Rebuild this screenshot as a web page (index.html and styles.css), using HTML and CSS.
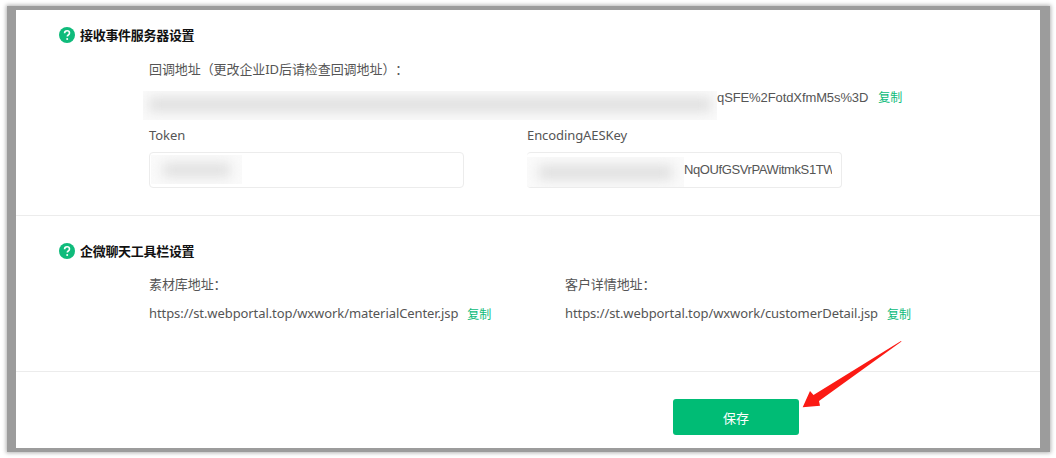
FILE: index.html
```html
<!DOCTYPE html>
<html lang="zh-CN">
<head>
<meta charset="utf-8">
<title>企微设置</title>
<link rel="stylesheet" href="styles.css">
</head>
<body>
<div class="frame">
  <main class="sheet">
    <section class="section first">
      <h2 class="title">
        <svg class="help" viewBox="0 0 16 16" aria-hidden="true"><circle cx="8" cy="8" r="8" fill="#0fbb7b"/><path d="M5.6 6.2c0-1.5 1-2.4 2.5-2.4s2.4.9 2.4 2.1c0 1-.5 1.5-1.3 2.1-.6.4-.9.8-.9 1.5" fill="none" stroke="#fff" stroke-width="1.6"/><circle cx="8.2" cy="11.9" r="1" fill="#fff"/></svg>
        <span>接收事件服务器设置</span>
      </h2>
      <div class="body">
        <div class="label">回调地址（更改企业ID后请检查回调地址）：</div>
        <div class="url-row">
          <div class="mask mask-url"><i></i></div>
          <span class="arial url-end">qSFE%2FotdXfmM5s%3D</span>
          <a class="copy">复制</a>
        </div>
        <div class="fields">
          <div class="field">
            <div class="label">Token</div>
            <div class="input"><div class="mask mask-token"><i></i></div></div>
          </div>
          <div class="field">
            <div class="label">EncodingAESKey</div>
            <div class="input key"><div class="mask mask-key"><i></i></div><span class="arial clip">NqOUfGSVrPAWitmkS1TW</span></div>
          </div>
        </div>
      </div>
    </section>
    <section class="section second">
      <h2 class="title">
        <svg class="help" viewBox="0 0 16 16" aria-hidden="true"><circle cx="8" cy="8" r="8" fill="#0fbb7b"/><path d="M5.6 6.2c0-1.5 1-2.4 2.5-2.4s2.4.9 2.4 2.1c0 1-.5 1.5-1.3 2.1-.6.4-.9.8-.9 1.5" fill="none" stroke="#fff" stroke-width="1.6"/><circle cx="8.2" cy="11.9" r="1" fill="#fff"/></svg>
        <span>企微聊天工具栏设置</span>
      </h2>
      <div class="columns">
        <div class="col">
          <div class="label">素材库地址：</div>
          <div class="link-row"><span>https://st.webportal.top/wxwork/materialCenter.jsp</span><a class="copy">复制</a></div>
        </div>
        <div class="col">
          <div class="label">客户详情地址：</div>
          <div class="link-row"><span>https://st.webportal.top/wxwork/customerDetail.jsp</span><a class="copy">复制</a></div>
        </div>
      </div>
    </section>
    <footer class="footer">
      <button class="save" type="button">保存</button>
    </footer>
  </main>
</div>
<svg class="arrow" viewBox="0 0 110 76" aria-hidden="true"><polygon points="109,1 21.5,55 18,51 10.7,67.3 28,65.7 27,61 109.5,1.6" fill="#fb1a14"/></svg>
</body>
</html>
```
FILE: styles.css
```css
* { box-sizing: border-box; }
html, body { margin: 0; height: 100%; }
body {
  width: 1056px;
  height: 458px;
  padding: 6px 6px 6px 7px;
  background: #fff;
  overflow: hidden;
  font-family: "Noto Sans", "Noto Sans CJK SC", sans-serif;
  font-size: 13px;
  color: #555;
  text-spacing-trim: space-all;
  letter-spacing: -0.08px;
}
.frame {
  height: 446px;
  padding: 4px 10px 4px 9px;
  background: #9c9c9c;
  box-shadow: 0 0 4px 1px #b4b4b4;
}
.sheet { height: 438px; background: #fff; display: flex; flex-direction: column; }
.section { border-bottom: 1px solid #ececec; }
.first { height: 206px; padding: 17px 0 0 43px; }
.second { height: 156px; padding: 27px 0 0 43px; }
.title {
  margin: 0;
  height: 16px;
  display: flex;
  align-items: center;
  gap: 5px;
  font-size: 13px;
  line-height: 15px;
  font-weight: 700;
  letter-spacing: -0.3px;
  color: #111;
  font-family: "Noto Sans CJK SC", sans-serif;
}
.title span { margin-top: -1px; }
.help { width: 16px; height: 16px; flex: none; }
.body { padding: 16px 0 0 90px; }
.label { height: 20px; line-height: 20px; white-space: nowrap; }
.arial { font-family: "Liberation Sans", sans-serif; font-size: 13px; white-space: nowrap; }
.url-row { display: flex; align-items: flex-start; height: 29px; margin: 12px 0 5px -6px; }
.url-end { line-height: 14px; letter-spacing: -0.1px; }
.copy { color: #0cbb7a; margin-left: 9px; font-size: 12px; letter-spacing: 0; font-family: "Noto Sans CJK SC", sans-serif; }
.url-row .copy { margin-left: 10px; line-height: 12px; }
.mask { flex: none; height: 29px; background: #fafafa; overflow: hidden; }
.mask i { display: block; background: #e0e0e0; filter: blur(6px); }
.mask-url { width: 574px; }
.mask-url i { margin: 6px 6px 0 6px; height: 15px; }
.mask-token { width: 91px; margin: 2px 0 0 1px; }
.mask-token i { margin: 8px 12px; height: 14px; }
.mask-key { width: 157px; height: 31px; margin-top: 4px; }
.mask-key i { margin: 8px 12px; height: 15px; }
.fields { display: flex; gap: 63px; }
.field { width: 315px; }
.input {
  height: 36px;
  margin-top: 7px;
  border: 1px solid #ececec;
  border-radius: 4px;
  overflow: hidden;
  background: #fff;
}
.key { display: flex; align-items: flex-start; border-left: 0; padding-right: 9px; }
.clip { overflow: hidden; line-height: 34px; flex: 1; min-width: 0; letter-spacing: -0.4px; }
.columns { display: flex; padding: 15px 0 0 90px; }
.col { width: 415px; }
.col + .col { padding-left: 1px; }
.link-row { display: flex; align-items: center; height: 20px; margin-top: 9px; white-space: nowrap; }
.footer { flex: 1; padding: 27px 0 0 657px; }
.save {
  display: block;
  width: 126px;
  height: 36px;
  border: 0;
  border-radius: 3px;
  background: #00bc75;
  color: #fff;
  font: 13px "Noto Sans CJK SC", sans-serif;
}
.arrow { position: absolute; left: 792px; top: 340px; width: 110px; height: 76px; }
```
